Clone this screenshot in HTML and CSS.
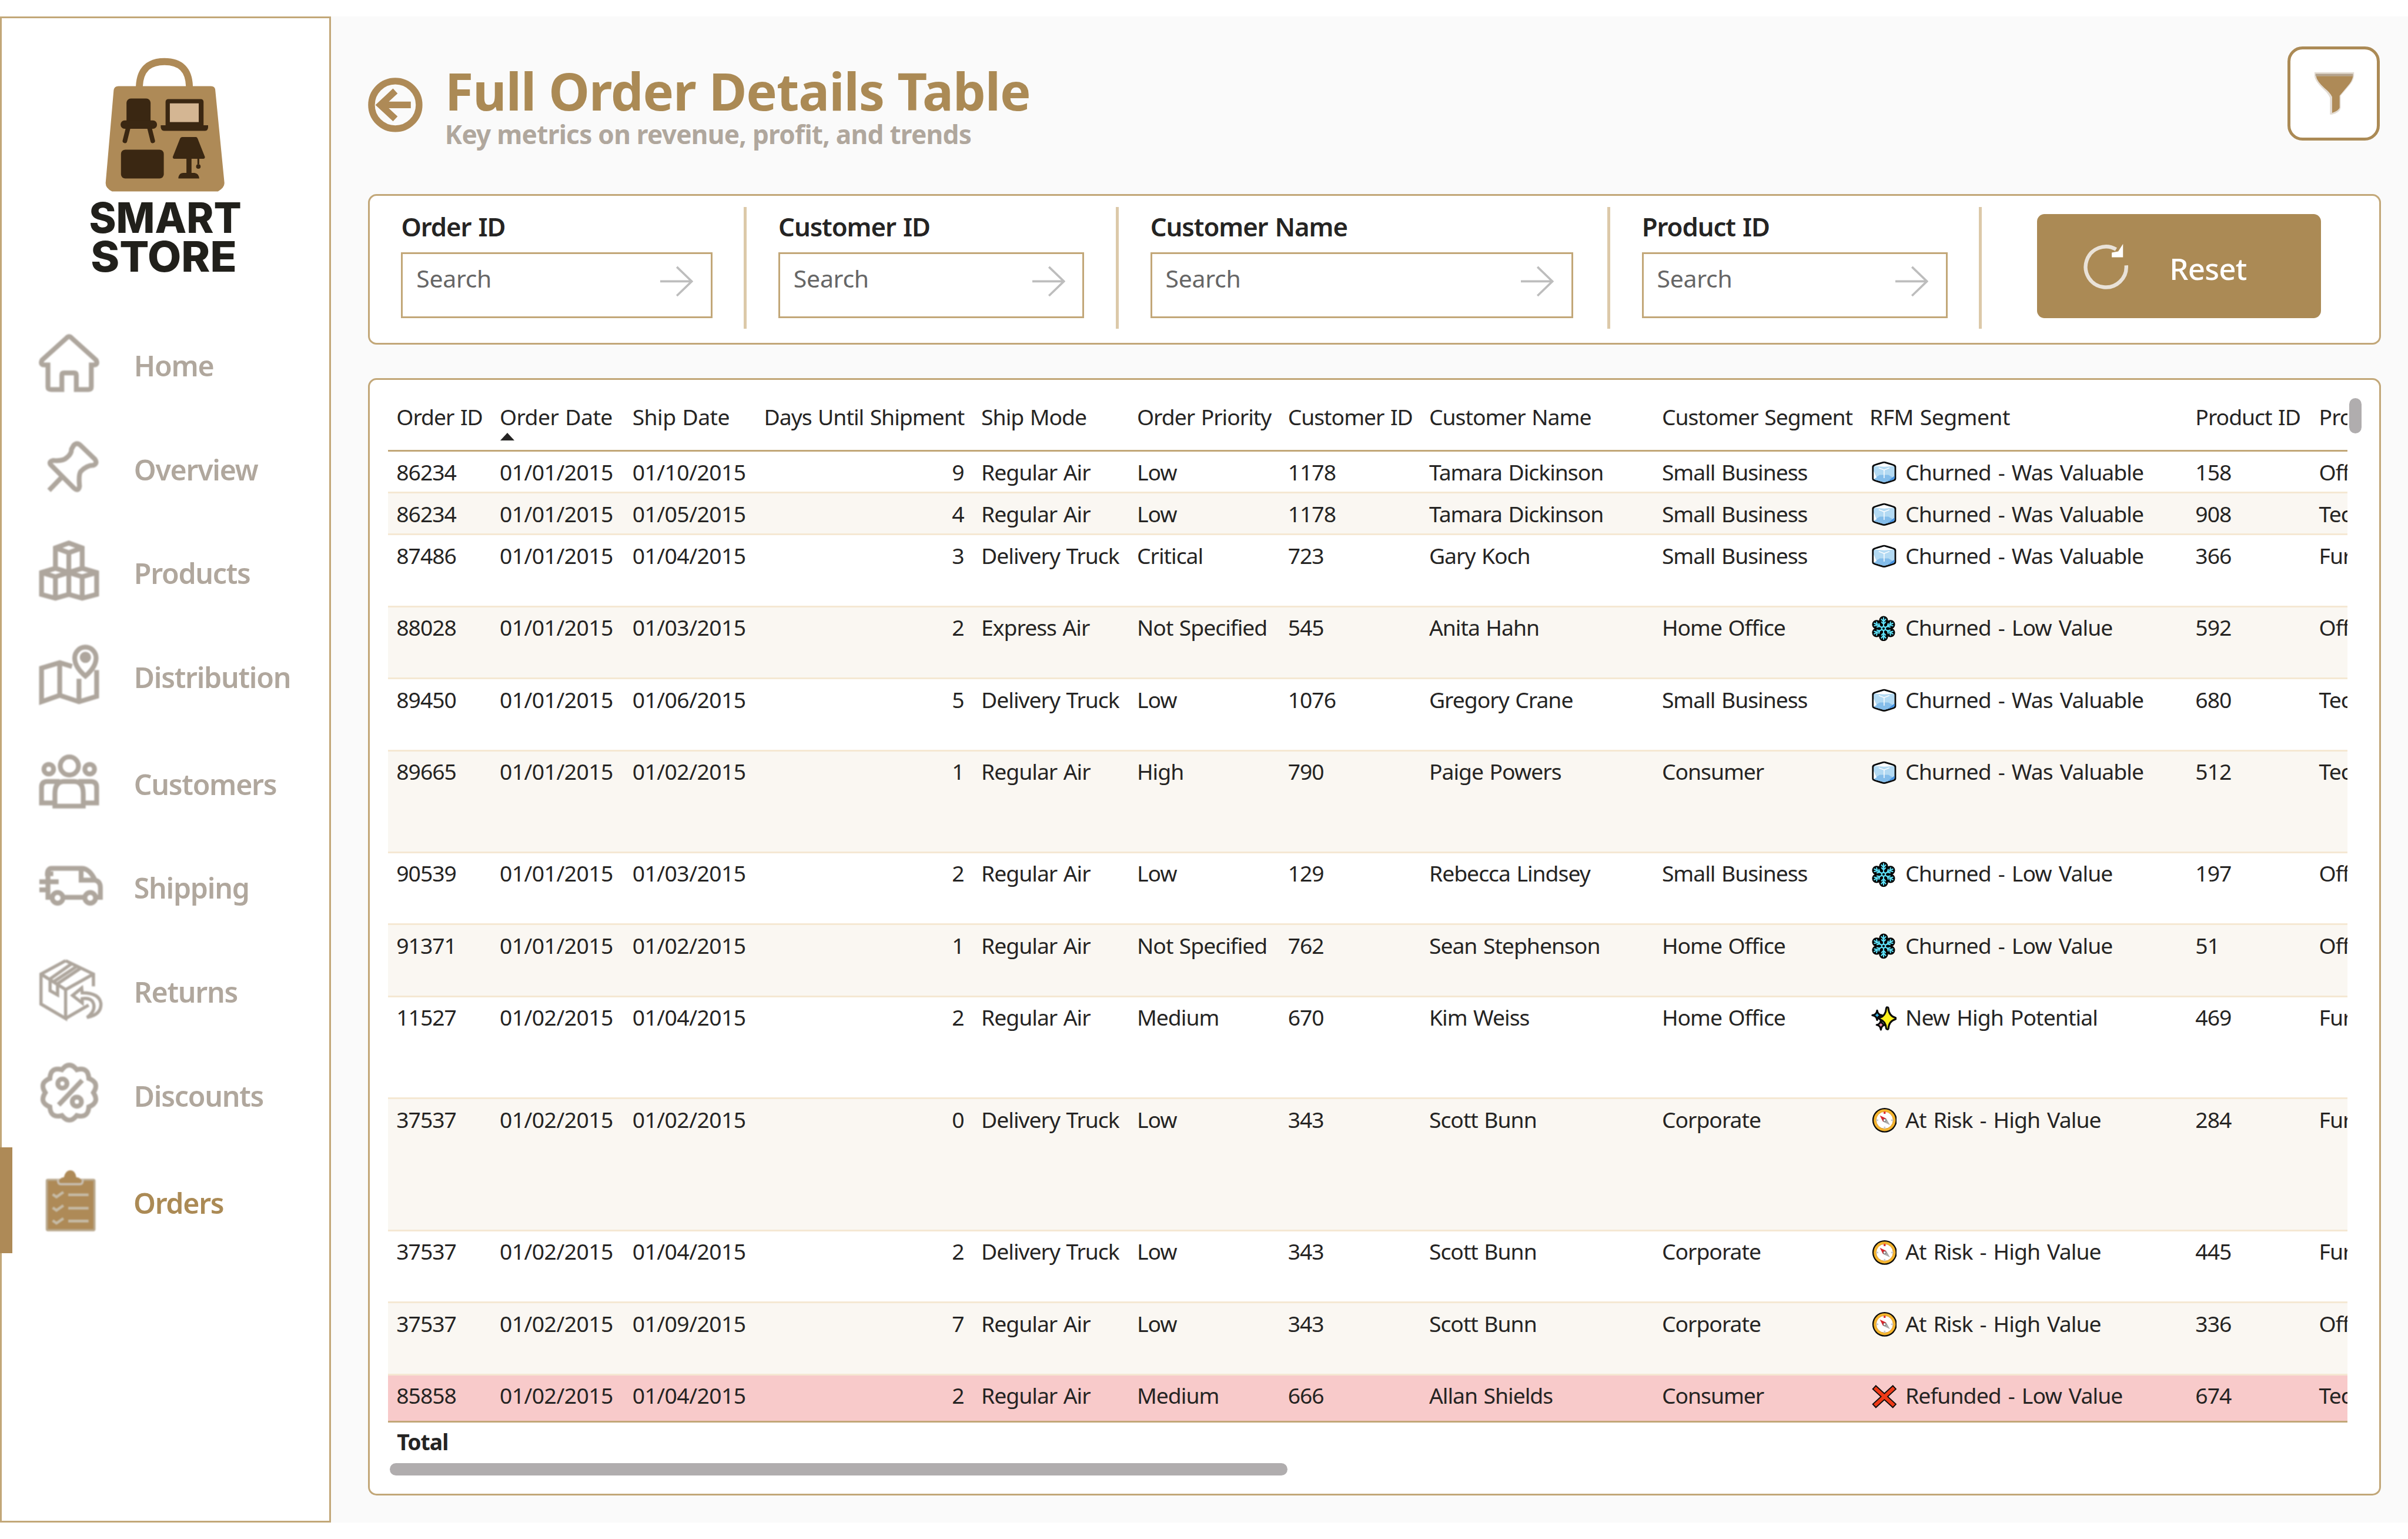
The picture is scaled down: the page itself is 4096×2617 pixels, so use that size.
FILE: index.html
```html
<!DOCTYPE html>
<html lang="en">
<head>
<meta charset="utf-8">
<title>Full Order Details Table</title>
<link rel="stylesheet" href="styles.css">
</head>
<body>
<svg class="defs" aria-hidden="true">
  <symbol id="arrow" viewBox="0 0 62 58"><path d="M0 29H59M31 2L59 29L31 56" fill="none" stroke="#bdbdbd" stroke-width="4"/></symbol>
  <symbol id="ice" viewBox="0 0 48 48">
    <path d="M24 3Q27 3 43 8.500Q46.500 10 46.500 13V35Q46.500 38 43 39.500Q27 45 24 45T5 39.500Q1.500 38 1.500 35V13Q1.500 10 5 8.500Q21 3 24 3Z" fill="#0b0b0b"/>
    <path d="M24 6L41 11Q43.500 12 43.500 14V34Q43.500 36 41 37L24 42L7 37Q4.500 36 4.500 34V14Q4.500 12 7 11Z" fill="#b3daf3"/>
    <path d="M24 6L42 11.500L24 13L6 11.500Z" fill="#fff"/>
    <path d="M4.500 35L16 28H32L43.500 35L41 37L24 42L7 37Z" fill="#84bdea"/>
    <path d="M31 40L43.500 30V34Q43 37 31 40Z" fill="#3f8ee0"/>
    <path d="M4.500 21L10 33L4.500 36Z" fill="#fff"/>
    <path d="M14 15L24 19L34 15M24 19V34" fill="none" stroke="#fff" stroke-width="1.600"/>
  </symbol>
  <symbol id="snow" viewBox="0 0 48 48">
    <g fill="#060606"><circle cx="23" cy="24" r="16"/><circle cx="23" cy="9" r="8.500"/><circle cx="36" cy="16.500" r="8.500"/><circle cx="36" cy="31.500" r="8.500"/><circle cx="23" cy="39" r="8.500"/><circle cx="10" cy="31.500" r="8.500"/><circle cx="10" cy="16.500" r="8.500"/></g>
    <g fill="none" stroke="#5fe3fb" stroke-width="2.300" stroke-linecap="round">
      <circle cx="23" cy="24" r="3.500"/>
      <path id="snow-arm" d="M23 20V4M19 6.500L23 11L27 6.500M19.500 12L23 15.500L26.500 12"/>
      <use href="#snow-arm" transform="rotate(60 23 24)"/><use href="#snow-arm" transform="rotate(120 23 24)"/><use href="#snow-arm" transform="rotate(180 23 24)"/><use href="#snow-arm" transform="rotate(240 23 24)"/><use href="#snow-arm" transform="rotate(300 23 24)"/>
    </g>
  </symbol>
  <symbol id="spark" viewBox="0 0 48 48">
    <g stroke="#0b0b0b" stroke-width="3.400" stroke-linejoin="round">
      <path d="M29 3Q32 3 32 5Q33 19 45 22.500Q48 24 45 25.500Q33 29 32 43Q31 46 28 43Q27 29 16 25.500Q13 24 16 22.500Q27 19 28 5Z" fill="#fdf01c"/>
      <path d="M11 9Q12 17 20 18Q12 19 11 27Q10 19 2 18Q10 17 11 9Z" fill="#38b9ee"/>
      <path d="M18 27Q19 35 26 36Q19 37 18 45Q17 37 10 36Q17 35 18 27Z" fill="#f291b5"/>
    </g>
  </symbol>
  <symbol id="compass" viewBox="0 0 48 48">
    <circle cx="25" cy="24" r="23" fill="#0b0b0b"/><circle cx="25" cy="24" r="20.500" fill="#f5b52e"/><circle cx="25" cy="24" r="16" fill="#fff" stroke="#d8921c" stroke-width="1"/>
    <path d="M25 36V40M9 24H13M37 24H41" stroke="#c9c9c9" stroke-width="3"/><path d="M25 8V12" stroke="#e0262c" stroke-width="3.500"/>
    <path d="M16 15L28 21L22 27Z" fill="#d8262c"/><path d="M35 33L28 21L22 27Z" fill="#a9a9a9"/><circle cx="25" cy="24" r="2.500" fill="#fff" stroke="#555"/>
  </symbol>
  <symbol id="cross" viewBox="0 0 48 48">
    <path d="M5 6L44 42M44 6L5 42" stroke="#0b0b0b" stroke-width="10.500"/><path d="M6.500 7.500L42.500 40.500M42.500 7.500L6.500 40.500" stroke="#ef3a17" stroke-width="6.500"/>
  </symbol>
</svg>

<div class="page">
  <aside class="sidebar">
    <svg class="logo" viewBox="160 100 300 416">
      <path d="M260 165V160Q262 114 307 114T353.500 160V165" fill="none" stroke="#ae8a57" stroke-width="13"/>
      <path d="M221 160H394Q401.500 160 402 168L419 341Q419 350 407 356.500H209Q197 351 197 341L212 168Q213 160 221 160Z" fill="#ae8a57"/>
      <g fill="#3a2712">
        <rect x="236" y="183" width="45" height="50" rx="8"/><rect x="225" y="224" width="68" height="15.500" rx="7.500"/>
        <path d="M239 238L233 262M279 238L285 262" stroke="#3a2712" stroke-width="8.500" stroke-linecap="round"/>
        <rect x="309" y="184" width="71" height="56" rx="5"/><path d="M300 233H388.500V237Q388 243.500 382 243.500H307Q301 243.500 300 237Z"/>
        <path d="M340 255H366Q368 255 369 258L382.500 292Q383 295.500 380 295.500H325Q322 295.500 322.500 292L336 258Q337 255 340 255Z"/>
        <path d="M348 290H357.500V322H348ZM333 332.500V330Q335 322 342 322H363Q371 323 372 332.500ZM368.500 294H372V306H368.500Z"/><circle cx="370.300" cy="310" r="4.200"/>
        <rect x="225.700" y="278.500" width="80" height="54" rx="8"/>
      </g>
      <rect x="317" y="192" width="54" height="35" fill="#d4b693"/>
      <text class="brand" x="166" y="434" textLength="285" lengthAdjust="spacingAndGlyphs">SMART</text>
      <text class="brand" x="169" y="507" textLength="273" lengthAdjust="spacingAndGlyphs">STORE</text>
    </svg>
    <nav class="nav">
      <a class="item"><svg viewBox="0 0 117 116"><path d="M50.500 11Q55.500 5 60.500 11L106 52Q110 60 103 61H97V102Q97 107 92 107H69V80Q69 76 65 76H46Q42 76 42 80V107H22Q16 107 16 102V61H8Q1 60 5 52Z"/></svg>Home</a>
      <a class="item"><svg viewBox="0 0 117 116"><path d="M64 17Q70 10 77 17L104 43Q109 51 101 54Q88 54 77 66Q73 72 75 93Q73 104 65 97L21 53Q17 47 26 45Q44 47 52 39Q60 33 60 24ZM41 77L18 101"/></svg>Overview</a>
      <a class="item"><svg viewBox="0 0 117 116"><path d="M30 52V15L55 6L80 15V52M30 15L55 24L80 15M55 24V102M4 61L30 53L55 61L80 53L107 61V102L80 109L55 102L30 109L4 102ZM4 61L30 69L55 61L80 69L107 61M30 69V109M80 69V109"/></svg>Products</a>
      <a class="item"><svg viewBox="0 0 117 116"><path d="M61 42L38 35L4 45V108L38 96L74 108L107 98V49M38 35V96M74 65V108M86 60Q66 43 66 26A20 20 0 0 1 106 26Q106 43 86 60Z"/><circle cx="86" cy="25" r="6" fill="#aea69d"/></svg>Distribution</a>
      <a class="item gap"><svg viewBox="0 0 117 116"><circle cx="56" cy="28" r="17"/><circle cx="17.500" cy="34" r="9"/><circle cx="94" cy="34" r="9"/><path d="M29 103V80Q29 57 46 57H65Q82 57 82 80V103ZM29 97H4V68Q4 57 15 57H38M82 97H107V68Q107 57 96 57H73"/></svg>Customers</a>
      <a class="item"><svg viewBox="0 0 117 116"><path d="M16 80V56M15 40Q14 26 23 26H80Q94 27 104 48Q114 50 114 62V80H107M83 80H46M24 80H16V36H26M78 28V48H103M0 51H36M0 66H20"/><circle cx="34" cy="81" r="10"/><circle cx="95" cy="81" r="10"/></svg>Shipping</a>
      <a class="item"><svg class="thin" viewBox="0 0 117 116"><path d="M49 4L3 29V85L49 112V58L3 29M49 4L101 29V52M49 58L101 29M49 112L92 87M60 10L20 38V60L34 68V47L77 18M69 15L27 43M79 55L62 69L80 83V75Q100 72 102 88Q103 100 89 110Q116 105 115 84Q112 64 80 64Z"/></svg>Returns</a>
      <a class="item"><svg viewBox="0 0 117 116"><path d="M101 56Q113.100 74.500 92.400 82.500Q91.300 104.500 69.900 98.800Q56 116 42.100 98.800Q20.700 104.500 19.600 82.500Q-1.100 74.500 11 56Q-1.100 37.500 19.600 29.500Q20.700 7.500 42.100 13.200Q56 -4 69.900 13.200Q91.300 7.500 92.400 29.500Q113.100 37.500 101 56ZM80 33L36 79"/><circle cx="43" cy="39" r="8.500"/><circle cx="70" cy="73" r="8.500"/></svg>Discounts</a>
      <a class="item active"><svg viewBox="0 0 117 116"><rect x="15" y="19" width="89" height="94" rx="2" fill="#ae8a57" stroke="#b9a88c" stroke-width="4"/><path d="M37 26Q37 15 47 14Q50 1 59 1T70 14Q81 15 81 26Z" fill="#ae8a57" stroke="none"/><path d="M36 18Q35 27 41 27H77Q83 27 82 18" stroke="#c9c0b3" stroke-width="4"/><path d="M26 46L33 51L46 42M55 47H93M26 71L33 76L46 67M55 72H93M26 95L33 100L46 91M55 96H93" stroke="#c6bba6" stroke-width="5"/></svg>Orders</a>
    </nav>
  </aside>

  <main class="main">
    <header class="head">
      <svg class="back" viewBox="0 0 102 102"><circle cx="51" cy="51" r="44.500" fill="#fff0"/><path d="M80 51H24M51 25L23 51L51 77"/></svg>
      <div class="titles"><h1>Full Order Details Table</h1><p>Key metrics on revenue, profit, and trends</p></div>
      <button class="filter-btn"><svg viewBox="0 0 76 82"><path d="M1 2H75V9Q74 18 65 28L50 46V68Q49 77 34 81H30V50Q27 42 18 34Q2 19 1 9Z" fill="#e3dcd3"/><path d="M4 9H73Q72 18 63 28L48 46V68Q47 73 34 78V48Q30 40 20 32Q5 18 4 9Z" fill="#ae8a57"/><path d="M3 7H73" stroke="#b3a28d" stroke-width="4"/></svg></button>
    </header>

    <section class="card filters">
      <div class="field f1"><label>Order ID</label><div class="search"><span>Search</span><svg><use href="#arrow"/></svg></div></div>
      <i class="sep"></i>
      <div class="field f2"><label>Customer ID</label><div class="search"><span>Search</span><svg><use href="#arrow"/></svg></div></div>
      <i class="sep"></i>
      <div class="field f3"><label>Customer Name</label><div class="search"><span>Search</span><svg><use href="#arrow"/></svg></div></div>
      <i class="sep s3"></i>
      <div class="field f4"><label>Product ID</label><div class="search"><span>Search</span><svg><use href="#arrow"/></svg></div></div>
      <i class="sep"></i>
      <button class="reset"><svg viewBox="0 0 90 90"><path d="M81 42A38 38 0 1 1 62 12" fill="none" stroke="#e9e2d8" stroke-width="7"/><path d="M75 2V27H54V18L66 16Z" fill="#fff"/></svg>Reset</button>
    </section>

    <section class="card report">
      <div class="viewport">
        <div class="table">
          <div class="row thead"><span>Order ID</span><span>Order Date<i class="sort"></i></span><span>Ship Date</span><span class="num">Days Until Shipment</span><span>Ship Mode</span><span>Order Priority</span><span>Customer ID</span><span>Customer Name</span><span>Customer Segment</span><span>RFM Segment</span><span>Product ID</span><span>Product Category</span></div>
          <div class="row l1"><span>86234</span><span>01/01/2015</span><span>01/10/2015</span><span class="num">9</span><span>Regular Air</span><span>Low</span><span>1178</span><span>Tamara Dickinson</span><span>Small Business</span><span class="rfm"><svg><use href="#ice"/></svg>Churned - Was Valuable</span><span>158</span><span>Office Supplies</span></div>
          <div class="row l1"><span>86234</span><span>01/01/2015</span><span>01/05/2015</span><span class="num">4</span><span>Regular Air</span><span>Low</span><span>1178</span><span>Tamara Dickinson</span><span>Small Business</span><span class="rfm"><svg><use href="#ice"/></svg>Churned - Was Valuable</span><span>908</span><span>Technology</span></div>
          <div class="row l2"><span>87486</span><span>01/01/2015</span><span>01/04/2015</span><span class="num">3</span><span>Delivery Truck</span><span>Critical</span><span>723</span><span>Gary Koch</span><span>Small Business</span><span class="rfm"><svg><use href="#ice"/></svg>Churned - Was Valuable</span><span>366</span><span>Furniture</span></div>
          <div class="row l2"><span>88028</span><span>01/01/2015</span><span>01/03/2015</span><span class="num">2</span><span>Express Air</span><span>Not Specified</span><span>545</span><span>Anita Hahn</span><span>Home Office</span><span class="rfm"><svg><use href="#snow"/></svg>Churned - Low Value</span><span>592</span><span>Office Supplies</span></div>
          <div class="row l2"><span>89450</span><span>01/01/2015</span><span>01/06/2015</span><span class="num">5</span><span>Delivery Truck</span><span>Low</span><span>1076</span><span>Gregory Crane</span><span>Small Business</span><span class="rfm"><svg><use href="#ice"/></svg>Churned - Was Valuable</span><span>680</span><span>Technology</span></div>
          <div class="row l3"><span>89665</span><span>01/01/2015</span><span>01/02/2015</span><span class="num">1</span><span>Regular Air</span><span>High</span><span>790</span><span>Paige Powers</span><span>Consumer</span><span class="rfm"><svg><use href="#ice"/></svg>Churned - Was Valuable</span><span>512</span><span>Technology</span></div>
          <div class="row l2"><span>90539</span><span>01/01/2015</span><span>01/03/2015</span><span class="num">2</span><span>Regular Air</span><span>Low</span><span>129</span><span>Rebecca Lindsey</span><span>Small Business</span><span class="rfm"><svg><use href="#snow"/></svg>Churned - Low Value</span><span>197</span><span>Office Supplies</span></div>
          <div class="row l2"><span>91371</span><span>01/01/2015</span><span>01/02/2015</span><span class="num">1</span><span>Regular Air</span><span>Not Specified</span><span>762</span><span>Sean Stephenson</span><span>Home Office</span><span class="rfm"><svg><use href="#snow"/></svg>Churned - Low Value</span><span>51</span><span>Office Supplies</span></div>
          <div class="row l3"><span>11527</span><span>01/02/2015</span><span>01/04/2015</span><span class="num">2</span><span>Regular Air</span><span>Medium</span><span>670</span><span>Kim Weiss</span><span>Home Office</span><span class="rfm"><svg><use href="#spark"/></svg>New High Potential</span><span>469</span><span>Furniture</span></div>
          <div class="row l4"><span>37537</span><span>01/02/2015</span><span>01/02/2015</span><span class="num">0</span><span>Delivery Truck</span><span>Low</span><span>343</span><span>Scott Bunn</span><span>Corporate</span><span class="rfm"><svg><use href="#compass"/></svg>At Risk - High Value</span><span>284</span><span>Furniture</span></div>
          <div class="row l2"><span>37537</span><span>01/02/2015</span><span>01/04/2015</span><span class="num">2</span><span>Delivery Truck</span><span>Low</span><span>343</span><span>Scott Bunn</span><span>Corporate</span><span class="rfm"><svg><use href="#compass"/></svg>At Risk - High Value</span><span>445</span><span>Furniture</span></div>
          <div class="row l2"><span>37537</span><span>01/02/2015</span><span>01/09/2015</span><span class="num">7</span><span>Regular Air</span><span>Low</span><span>343</span><span>Scott Bunn</span><span>Corporate</span><span class="rfm"><svg><use href="#compass"/></svg>At Risk - High Value</span><span>336</span><span>Office Supplies</span></div>
          <div class="row refunded"><span>85858</span><span>01/02/2015</span><span>01/04/2015</span><span class="num">2</span><span>Regular Air</span><span>Medium</span><span>666</span><span>Allan Shields</span><span>Consumer</span><span class="rfm"><svg><use href="#cross"/></svg>Refunded - Low Value</span><span>674</span><span>Technology</span></div>
        </div>
        <i class="vbar"></i>
      </div>
      <div class="total">Total</div>
      <i class="hbar"></i>
    </section>
  </main>
</div>
</body>
</html>
```
FILE: styles.css
```css
/* 1rem = 100 design units on a 4500-unit wide canvas */
html { font-size: 2.22222vw; }
* { box-sizing: border-box; }
body { margin: 0; background: #fff; color: #252423; font-family: "Noto Sans", "Open Sans", sans-serif; overflow: hidden; }
h1, p { margin: 0; }
button { font: inherit; padding: 0; }
i { display: block; }
.defs { display: none; }

.page { display: flex; height: 28.13rem; margin-top: .31rem; }

.sidebar { width: 6.19rem; border: .035rem solid #c2a778; background: #fff; flex: none; }
.logo { display: block; width: 3rem; height: 4.16rem; margin: .665rem 0 0 1.575rem; overflow: visible; }
.brand { font: 800 79px Inter, sans-serif; fill: #21201b; }
.nav { display: flex; flex-direction: column; margin: .69rem 0 0 -.035rem; }
.item { display: flex; align-items: center; height: 1.94rem; padding-left: .74rem; gap: .595rem; font-size: .53rem; font-weight: 600; line-height: .8rem; color: #b0a79d; letter-spacing: -.014rem; }
.item.gap { margin-top: .06rem; }
.item svg { width: 1.17rem; height: 1.16rem; margin-bottom: .08rem; fill: none; stroke: #aea69d; stroke-width: 9; overflow: visible; flex: none; filter: blur(.012rem); }
.item svg.thin { stroke-width: 6; }
.item.active { height: 1.98rem; padding: .08rem 0 0 .5rem; border-left: .24rem solid #ae8a57; color: #ab8a55; }

.main { flex: 1; background: #fafafa; padding: 0 .505rem 0 .69rem; }
.head { display: flex; align-items: flex-start; height: 3.315rem; padding-top: .56rem; }
.back { width: 1.02rem; height: 1.02rem; margin-top: .58rem; fill: none; stroke: #ae8a57; stroke-width: 12.5; }
.titles { flex: 1; padding: .33rem 0 0 .415rem; white-space: nowrap; }
h1 { font-size: .97rem; line-height: 1rem; font-weight: 700; color: #ab8a55; letter-spacing: -.011rem; }
.titles p { font-size: .485rem; line-height: .62rem; font-weight: 700; color: #b0a79d; letter-spacing: -.008rem; }
.filter-btn { width: 1.72rem; height: 1.76rem; margin-right: .025rem; border: .065rem solid #ab8a55; border-radius: .28rem; background: #fff; display: flex; justify-content: center; }
.filter-btn svg { width: .76rem; height: .82rem; margin: .4rem 0 0 .03rem; }

.card { background: #fff; border: .035rem solid #c2a778; border-radius: .16rem; }
.filters { height: 2.81rem; display: flex; align-items: flex-start; padding: .21rem 0 0 .585rem; }
.field label { display: block; margin-top: .06rem; font-size: .48rem; line-height: .6rem; font-weight: 600; white-space: nowrap; letter-spacing: -.012rem; word-spacing: .02rem; }
.search { display: flex; justify-content: space-between; align-items: flex-start; height: 1.225rem; margin-top: .19rem; padding: .15rem .32rem 0 .25rem; border: .035rem solid #c2a778; font-size: .45rem; line-height: .6rem; color: #666; letter-spacing: -.003rem; }
.search svg { width: .62rem; height: .58rem; margin-top: .07rem; }
.f1 { width: 5.815rem; } .f2 { width: 5.716rem; } .f3 { width: 7.9rem; } .f4 { width: 5.71rem; }
.sep { width: .055rem; height: 2.27rem; margin: 0 .59rem; background: #dcc9a9; }
.sep.s3 { margin-left: .64rem; }
.reset { width: 5.305rem; height: 1.95rem; margin: .13rem 0 0 .44rem; border: 0; border-radius: .14rem; background: #ab8a55; color: #fff; display: flex; align-items: center; padding: .09rem 0 0 .855rem; gap: .72rem; font-size: .56rem; font-weight: 500; letter-spacing: -.008rem; }
.reset svg { width: .9rem; height: .9rem; margin-bottom: .07rem; }

.report { height: 20.87rem; margin-top: .63rem; padding-left: .34rem; }
.viewport { display: flex; align-items: flex-start; }
.table { width: 36.62rem; overflow: hidden; }
.row { display: grid; grid-template-columns: 1.93rem 2.48rem 2.46rem 4.06rem 2.91rem 2.82rem 2.64rem 4.35rem 3.88rem 6.09rem 2.31rem .69rem; padding-top: .105rem; border-bottom: .035rem solid #f5e8d3; font-size: .41rem; line-height: .56rem; white-space: nowrap; letter-spacing: -.011rem; word-spacing: .02rem; }
.row > span { padding: 0 .17rem 0 .155rem; min-width: 0; }
.row > span:nth-child(2), .row > span:nth-child(3) { letter-spacing: -.006rem; }
.row .num { text-align: right; }
.row:nth-child(odd) { background: #faf7f2; }
.row.thead { height: 1.34rem; padding-top: .415rem; background: #fff; border-bottom: .035rem solid #c2a778; }
.sort { width: 0; height: 0; margin: .015rem 0 0 .015rem; border: .14rem solid transparent; border-top: 0; border-bottom: .145rem solid #252423; }
.l1 { height: .78rem; } .l2 { height: 1.346rem; } .l3 { height: 1.904rem; } .l4 { height: 2.465rem; }
.row.refunded { height: .88rem; background: #f8caca; border-bottom: .035rem solid #c2a778; }
.row > .rfm { display: flex; align-items: center; gap: .16rem; height: .56rem; letter-spacing: -.01rem; word-spacing: .035rem; }
.row.thead > span:nth-child(10) { letter-spacing: -.006rem; }
.rfm svg { width: .48rem; height: .48rem; margin: .02rem 0 0 .03rem; flex: none; }
.vbar { width: .23rem; height: .66rem; margin: .335rem 0 0 .03rem; border-radius: .12rem; background: #b0adae; }
.total { margin: .09rem 0 0 .165rem; font-size: .41rem; line-height: .56rem; font-weight: 700; letter-spacing: -.01rem; }
.hbar { width: 16.78rem; height: .225rem; margin: .115rem 0 0 .03rem; border-radius: .12rem; background: #b0adae; }
```
